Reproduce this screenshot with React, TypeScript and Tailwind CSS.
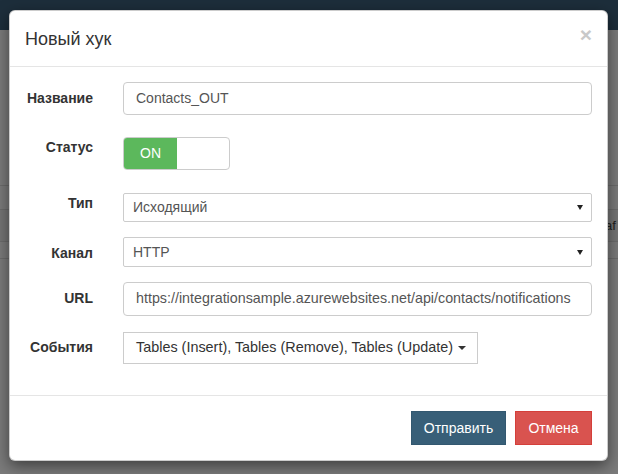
import type { ReactNode } from 'react'

function Caret() {
  return <span className="inline-block w-0 h-0 border-x-[4px] border-x-transparent border-t-[4px] border-t-[#333] align-middle" />
}

function SelectArrow() {
  return <span className="inline-block w-0 h-0 border-x-[3px] border-x-transparent border-t-[5px] border-t-[#222]" />
}

function Row({ label, labelPad, className, children }: { label: string; labelPad: string; className: string; children: ReactNode }) {
  return (
    <div className={`flex ${className}`}>
      <label className={`w-[68px] shrink-0 text-right font-bold text-[14px] leading-[20px] text-[#333] ${labelPad}`}>{label}</label>
      <div className="ml-[30px] flex-1 h-full">{children}</div>
    </div>
  )
}

function App() {
  return (
    <div className="relative w-[618px] h-[474px] overflow-hidden bg-[#7b7b7b] font-['Liberation_Sans',Arial,sans-serif]">
      {/* page behind the overlay */}
      <div className="h-[30px] bg-[#1d2e3b]" />
      <div className="h-[156px] border-b border-[#6c6c6c]" />
      <div className="h-[24px] border-b border-[#6c6c6c]" />
      <div className="h-[32px] border-b border-[#6c6c6c] bg-[#757575] pl-[605px] whitespace-nowrap text-[13px] leading-[32px] text-[#1e1e1e]">af</div>
      <div className="h-[17px] border-b border-[#6c6c6c]" />

      {/* modal */}
      <div className="absolute left-[9px] top-[10px] w-[599px] bg-white border border-black/20 rounded-[6px] shadow-[0_5px_15px_rgba(0,0,0,0.5)]">
        <div className="h-[56px] px-[15px] pt-[15px] border-b border-[#e5e5e5] flex justify-between items-start">
          <h4 className="text-[18px] leading-[26px] text-[#333]">Новый хук</h4>
          <span className="text-[21px] leading-[21px] font-bold text-[#c9c9c9] -mt-[2px]">×</span>
        </div>

        <div className="px-[15px] pt-[15px] pb-[31px]">
          <Row label="Название" labelPad="pt-[6px]" className="h-[33px]">
            <div className="h-full border border-[#ccc] rounded-[4px] pl-[12px] flex items-center text-[14px] text-[#555]">Contacts_OUT</div>
          </Row>
          <Row label="Статус" labelPad="pt-0" className="mt-[22px] h-[33px]">
            <div className="w-[107px] h-full border border-[#ccc] rounded-[4px] overflow-hidden flex">
              <div className="w-[53px] h-full bg-[#5cb85c] text-white text-[14px] flex items-center justify-center">ON</div>
            </div>
          </Row>
          <Row label="Тип" labelPad="pt-0" className="mt-[23px] h-[29px]">
            <div className="h-full border border-[#ccc] rounded-[2px] pl-[9px] pr-[8px] flex items-center justify-between text-[14px] text-[#555]">
              <span>Исходящий</span>
              <SelectArrow />
            </div>
          </Row>
          <Row label="Канал" labelPad="pt-[6px]" className="mt-[15px] h-[30px]">
            <div className="h-full border border-[#ccc] rounded-[2px] pl-[9px] pr-[8px] flex items-center justify-between text-[14px] text-[#555]">
              <span>HTTP</span>
              <SelectArrow />
            </div>
          </Row>
          <Row label="URL" labelPad="pt-[6px]" className="mt-[15px] h-[34px]">
            <div className="h-full border border-[#ccc] rounded-[4px] pl-[12px] flex items-center text-[14.3px] text-[#555] whitespace-nowrap">https://integrationsample.azurewebsites.net/api/contacts/notifications</div>
          </Row>
          <Row label="События" labelPad="pt-[5px]" className="mt-[16px] h-[32px]">
            <div className="w-[355px] h-full border border-[#ccc] pl-[12px] pr-[12px] flex items-center text-[14.4px] text-[#333] whitespace-nowrap">
              <span>Tables (Insert), Tables (Remove), Tables (Update)</span>
              <span className="ml-[5px] flex items-center"><Caret /></span>
            </div>
          </Row>
        </div>

        <div className="border-t border-[#e5e5e5] p-[15px] flex justify-end gap-[9px]">
          <button className="h-[34px] w-[95px] bg-[#385f78] border border-[#335870] text-white text-[14px]">Отправить</button>
          <button className="h-[34px] w-[77px] bg-[#d9534f] border border-[#d43f3a] text-white text-[14px]">Отмена</button>
        </div>
      </div>
    </div>
  )
}

export default App
